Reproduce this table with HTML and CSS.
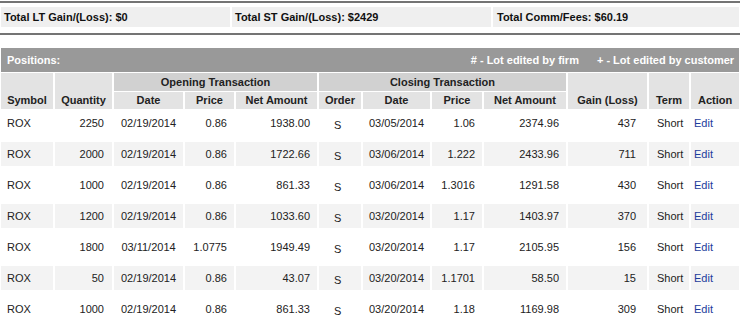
FILE: index.html
```html
<!DOCTYPE html>
<html>
<head>
<meta charset="utf-8">
<link rel="stylesheet" href="styles.css">
</head>
<body>
<div class="page">
  <div class="rule rule-top"></div>
  <div class="summary">
    <div class="sum-cell c1">Total LT Gain/(Loss): $0</div>
    <div class="sum-cell c2">Total ST Gain/(Loss): $2429</div>
    <div class="sum-cell c3">Total Comm/Fees: $60.19</div>
  </div>
  <div class="rule rule-bottom"></div>
  <table class="positions">
    <colgroup>
      <col class="w-sym"><col class="w-qty"><col class="w-date"><col class="w-price"><col class="w-net">
      <col class="w-order"><col class="w-date2"><col class="w-price2"><col class="w-net2">
      <col class="w-gain"><col class="w-term"><col class="w-action">
    </colgroup>
    <thead>
      <tr>
        <th colspan="12" class="bar">
          <div class="bar-inner">
            <span>Positions:</span>
            <span class="legend"><span># - Lot edited by firm</span><span>+ - Lot edited by customer</span></span>
          </div>
        </th>
      </tr>
      <tr class="hrow1">
        <th rowspan="2" class="lite">Symbol</th>
        <th rowspan="2" class="lite">Quantity</th>
        <th colspan="3" class="group">Opening Transaction</th>
        <th colspan="4" class="group">Closing Transaction</th>
        <th rowspan="2" class="lite">Gain (Loss)</th>
        <th rowspan="2" class="lite">Term</th>
        <th rowspan="2" class="lite">Action</th>
      </tr>
      <tr class="hrow2">
        <th class="lite">Date</th>
        <th class="lite">Price</th>
        <th class="lite">Net Amount</th>
        <th class="lite">Order</th>
        <th class="lite">Date</th>
        <th class="lite">Price</th>
        <th class="lite">Net Amount</th>
      </tr>
    </thead>
    <tbody>
      <tr><td class="sym">ROX</td><td class="num">2250</td><td class="ctr">02/19/2014</td><td class="num">0.86</td><td class="num">1938.00</td><td class="ord">S</td><td class="ctr">03/05/2014</td><td class="num">1.06</td><td class="num">2374.96</td><td class="gain">437</td><td class="term">Short</td><td class="act"><a href="#">Edit</a></td></tr>
      <tr><td class="sym">ROX</td><td class="num">2000</td><td class="ctr">02/19/2014</td><td class="num">0.86</td><td class="num">1722.66</td><td class="ord">S</td><td class="ctr">03/06/2014</td><td class="num">1.222</td><td class="num">2433.96</td><td class="gain">711</td><td class="term">Short</td><td class="act"><a href="#">Edit</a></td></tr>
      <tr><td class="sym">ROX</td><td class="num">1000</td><td class="ctr">02/19/2014</td><td class="num">0.86</td><td class="num">861.33</td><td class="ord">S</td><td class="ctr">03/06/2014</td><td class="num">1.3016</td><td class="num">1291.58</td><td class="gain">430</td><td class="term">Short</td><td class="act"><a href="#">Edit</a></td></tr>
      <tr><td class="sym">ROX</td><td class="num">1200</td><td class="ctr">02/19/2014</td><td class="num">0.86</td><td class="num">1033.60</td><td class="ord">S</td><td class="ctr">03/20/2014</td><td class="num">1.17</td><td class="num">1403.97</td><td class="gain">370</td><td class="term">Short</td><td class="act"><a href="#">Edit</a></td></tr>
      <tr><td class="sym">ROX</td><td class="num">1800</td><td class="ctr">03/11/2014</td><td class="num">1.0775</td><td class="num">1949.49</td><td class="ord">S</td><td class="ctr">03/20/2014</td><td class="num">1.17</td><td class="num">2105.95</td><td class="gain">156</td><td class="term">Short</td><td class="act"><a href="#">Edit</a></td></tr>
      <tr><td class="sym">ROX</td><td class="num">50</td><td class="ctr">02/19/2014</td><td class="num">0.86</td><td class="num">43.07</td><td class="ord">S</td><td class="ctr">03/20/2014</td><td class="num">1.1701</td><td class="num">58.50</td><td class="gain">15</td><td class="term">Short</td><td class="act"><a href="#">Edit</a></td></tr>
      <tr><td class="sym">ROX</td><td class="num">1000</td><td class="ctr">02/19/2014</td><td class="num">0.86</td><td class="num">861.33</td><td class="ord">S</td><td class="ctr">03/20/2014</td><td class="num">1.18</td><td class="num">1169.98</td><td class="gain">309</td><td class="term">Short</td><td class="act"><a href="#">Edit</a></td></tr>
    </tbody>
  </table>
</div>
</body>
</html>
```

FILE: styles.css
```css
html, body {
  margin: 0;
  padding: 0;
  background: #ffffff;
}
body {
  font-family: "Liberation Sans", Arial, sans-serif;
  font-size: 11px;
  color: #222222;
}
.page {
  padding-top: 1px;
  width: 746px;
}
.rule {
  height: 2px;
  width: 740px;
  background: #747474;
}
.rule-top {
  margin-bottom: 4px;
}
.rule-bottom {
  margin-top: 6px;
}
.summary {
  display: flex;
  gap: 2px;
  margin-left: 1px;
  height: 20px;
}
.sum-cell {
  background: #efefef;
  font-weight: bold;
  color: #111111;
  line-height: 20px;
  padding-left: 3px;
  box-sizing: border-box;
}
.c1 { width: 229px; }
.c2 { width: 259px; }
.c3 { width: 246px; padding-left: 4px; }

.positions {
  margin-top: 12px;
  margin-left: -1px;
  width: 742px;
  table-layout: fixed;
  border-collapse: separate;
  border-spacing: 2px 1px;
}
.w-sym { width: 52px; }
.w-qty { width: 57px; }
.w-date { width: 69px; }
.w-price { width: 49px; }
.w-net { width: 81px; }
.w-order { width: 42px; }
.w-date2 { width: 67px; }
.w-price2 { width: 50px; }
.w-net2 { width: 82px; }
.w-gain { width: 79px; }
.w-term { width: 40px; }
.w-action { width: 48px; }

.positions th,
.positions td {
  padding: 0;
  white-space: nowrap;
  overflow: hidden;
}
.bar {
  background: #999999;
  color: #ffffff;
  font-weight: bold;
  height: 24px;
  text-align: left;
}
.bar-inner {
  display: flex;
  justify-content: space-between;
  align-items: center;
  padding: 0 5px 0 6px;
  line-height: 24px;
}
.legend {
  display: flex;
  gap: 18px;
}
.hrow1 th {
  line-height: 18px;
}
.hrow2 th {
  line-height: 17px;
}
.positions thead th.lite,
.positions thead th.group {
  font-weight: bold;
  color: #222222;
  text-align: center;
  vertical-align: bottom;
}
.lite {
  background: #e3e3e3;
}
.group {
  background: #d1d1d1;
}
.positions tbody td {
  line-height: 24px;
  border-top: 1px solid #ffffff;
  border-bottom: 5px solid #ffffff;
  background-clip: padding-box;
  color: #222222;
}
.positions tbody tr:nth-child(even) td {
  background-color: #f3f3f3;
}
.positions tbody td.sym { text-align: left; padding-left: 6px; }
.positions tbody td.num { text-align: right; padding-right: 7px; }
.positions tbody td.num:nth-child(2) { padding-right: 8px; }
.positions tbody td.ctr { text-align: center; }
.positions tbody td.ord {
  text-align: left;
  padding-left: 15px;
  padding-top: 4px;
  line-height: 20px;
}
.positions tbody td.gain { text-align: right; padding-right: 11px; }
.positions tbody td.term { text-align: left; padding-left: 8px; }
.positions tbody td.act { text-align: left; padding-left: 3px; }
.act a {
  color: #1c3c9c;
  text-decoration: none;
}
```
